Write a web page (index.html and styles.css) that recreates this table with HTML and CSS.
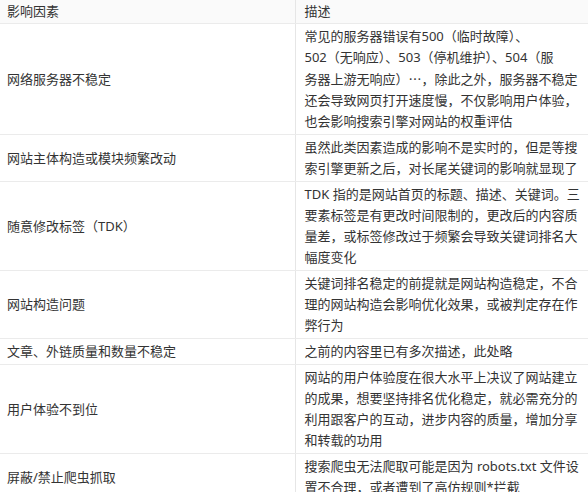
FILE: index.html
```html
<!DOCTYPE html>
<html lang="zh">
<head>
<meta charset="utf-8">
<link rel="stylesheet" href="styles.css">
</head>
<body>
<table class="factors">
  <thead>
    <tr><th class="c-name">影响因素</th><th class="c-desc">描述</th></tr>
  </thead>
  <tbody>
    <tr><td class="c-name">网络服务器不稳定</td><td class="c-desc">常见的服务器错误有500（临时故障）、<br>502（无响应）、503（停机维护）、504（服<br>务器上游无响应）<span class="cjk">…</span>，除此之外，服务器不稳定<br>还会导致网页打开速度慢，不仅影响用户体验，<br>也会影响搜索引擎对网站的权重评估</td></tr>
    <tr><td class="c-name">网站主体构造或模块频繁改动</td><td class="c-desc">虽然此类因素造成的影响不是实时的，但是等搜<br>索引擎更新之后，对长尾关键词的影响就显现了</td></tr>
    <tr><td class="c-name">随意修改标签（TDK）</td><td class="c-desc">TDK 指的是网站首页的标题、描述、关键词。三<br>要素标签是有更改时间限制的，更改后的内容质<br>量差，或标签修改过于频繁会导致关键词排名大<br>幅度变化</td></tr>
    <tr><td class="c-name">网站构造问题</td><td class="c-desc">关键词排名稳定的前提就是网站构造稳定，不合<br>理的网站构造会影响优化效果，或被判定存在作<br>弊行为</td></tr>
    <tr><td class="c-name">文章、外链质量和数量不稳定</td><td class="c-desc">之前的内容里已有多次描述，此处略</td></tr>
    <tr><td class="c-name">用户体验不到位</td><td class="c-desc">网站的用户体验度在很大水平上决议了网站建立<br>的成果，想要坚持排名优化稳定，就必需充分的<br>利用跟客户的互动，进步内容的质量，增加分享<br>和转载的功用</td></tr>
    <tr><td class="c-name">屏蔽/禁止爬虫抓取</td><td class="c-desc">搜索爬虫无法爬取可能是因为 robots.txt 文件设<br>置不合理，或者遭到了高仿规则*拦截</td></tr>
  </tbody>
</table>
</body>
</html>
```

FILE: styles.css
```css
html, body {
  margin: 0;
  padding: 0;
  background: #ffffff;
}
body {
  font-family: "Noto Sans", "Noto Sans CJK SC", sans-serif;
  font-size: 13px;
  line-height: 21px;
  color: #333333;
}
.cjk {
  font-family: "Noto Sans CJK SC", sans-serif;
}
.factors {
  width: 588px;
  border-collapse: collapse;
  table-layout: fixed;
}
.factors th, .factors td {
  text-align: left;
  vertical-align: middle;
  font-weight: normal;
  border-bottom: 1px solid #ebebeb;
}
.factors th {
  padding: 1px 0 1px 9px;
  background: #fafafa;
}
.factors td {
  padding: 2px 0 2px 9px;
}
.factors .c-name {
  width: 295px;
  box-sizing: border-box;
  padding-left: 7px;
  border-right: 1px solid #e6e6e6;
}
.factors .c-desc {
  padding-left: 9px;
}
```
